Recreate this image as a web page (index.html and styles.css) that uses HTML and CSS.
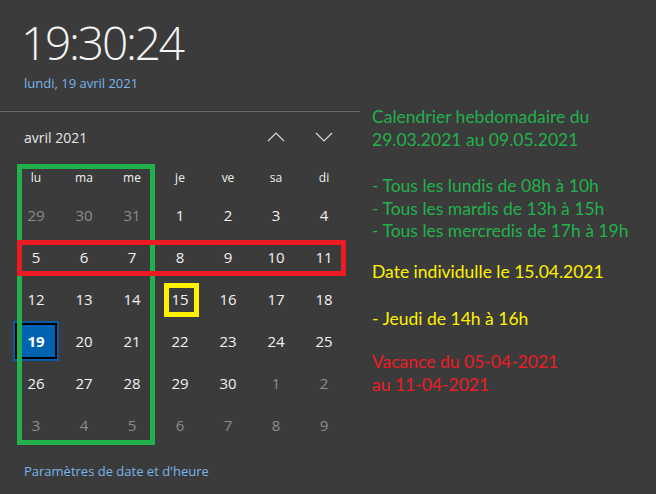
FILE: index.html
```html
<!DOCTYPE html>
<html lang="fr">
<head>
<meta charset="utf-8">
<title>Calendrier</title>
<link rel="stylesheet" href="styles.css">
</head>
<body>
<div class="page">
  <section class="flyout">
    <div class="clock">19:30:24</div>
    <div class="today-line">lundi, 19 avril 2021</div>
    <hr class="sep">
    <div class="month-bar">
      <span class="month">avril 2021</span>
      <div class="arrows">
        <svg class="arrow" width="18" height="10" viewBox="0 0 18 10"><polyline points="1,9 9,1 17,9" fill="none" stroke="#d8d8d8" stroke-width="1.2"/></svg>
        <svg class="arrow" width="18" height="10" viewBox="0 0 18 10"><polyline points="1,1 9,9 17,1" fill="none" stroke="#d8d8d8" stroke-width="1.2"/></svg>
      </div>
    </div>
    <div class="grid">
      <div class="dow">lu</div><div class="dow">ma</div><div class="dow">me</div><div class="dow">je</div><div class="dow">ve</div><div class="dow">sa</div><div class="dow">di</div>
      <div class="day other">29</div><div class="day other">30</div><div class="day other">31</div><div class="day">1</div><div class="day">2</div><div class="day">3</div><div class="day">4</div>
      <div class="day">5</div><div class="day">6</div><div class="day">7</div><div class="day">8</div><div class="day">9</div><div class="day">10</div><div class="day">11</div>
      <div class="day">12</div><div class="day">13</div><div class="day">14</div><div class="day">15</div><div class="day">16</div><div class="day">17</div><div class="day">18</div>
      <div class="day today">19</div><div class="day">20</div><div class="day">21</div><div class="day">22</div><div class="day">23</div><div class="day">24</div><div class="day">25</div>
      <div class="day">26</div><div class="day">27</div><div class="day">28</div><div class="day">29</div><div class="day">30</div><div class="day other">1</div><div class="day other">2</div>
      <div class="day other">3</div><div class="day other">4</div><div class="day other">5</div><div class="day other">6</div><div class="day other">7</div><div class="day other">8</div><div class="day other">9</div>
    </div>
    <a class="settings">Paramètres de date et d'heure</a>
    <div class="mark mark-green"></div>
    <div class="mark mark-red"></div>
    <div class="mark mark-yellow"></div>
  </section>
  <section class="notes">
    <p class="note green n1">Calendrier hebdomadaire du<br>29.03.2021 au 09.05.2021</p>
    <p class="note green n2">- Tous les lundis de 08h à 10h<br>- Tous les mardis de 13h à 15h<br>- Tous les mercredis de 17h à 19h</p>
    <p class="note yellow n3">Date individulle le 15.04.2021</p>
    <p class="note yellow n4">- Jeudi de 14h à 16h</p>
    <p class="note red n5">Vacance du 05-04-2021<br>au 11-04-2021</p>
  </section>
</div>
</body>
</html>
```
FILE: styles.css
```css
html, body {
  margin: 0;
  padding: 0;
}
body {
  background: #3b3b3b;
  width: 656px;
  height: 494px;
  overflow: hidden;
  font-family: "Open Sans", "Noto Sans", sans-serif;
  color: #ffffff;
}
.page {
  display: flex;
  height: 494px;
}
.flyout {
  position: relative;
  width: 360px;
  flex: none;
}
.clock {
  padding: 20px 0 0 21px;
  font-size: 46px;
  line-height: 44px;
  font-weight: 300;
  letter-spacing: -2.2px;
  color: #f4f4f4;
}
.today-line {
  margin-top: 10px;
  padding-left: 24px;
  font-size: 13px;
  line-height: 18px;
  color: #78b6ea;
}
.sep {
  margin: 19px 0 0 0;
  border: 0;
  border-top: 1px solid #6a6a6a;
  height: 0;
}
.month-bar {
  display: flex;
  align-items: center;
  justify-content: space-between;
  height: 36px;
  margin-top: 7px;
  padding: 0 27px 0 24px;
}
.month {
  font-size: 14px;
  color: #e6e6e6;
}
.arrows {
  display: flex;
  gap: 30px;
  align-items: center;
}
.arrow {
  display: block;
}
.grid {
  display: grid;
  grid-template-columns: repeat(7, 48px);
  grid-template-rows: 34px repeat(6, 42px);
  margin: 5px 0 0 12px;
}
.dow {
  display: flex;
  align-items: center;
  justify-content: center;
  font-size: 12px;
  color: #f0f0f0;
}
.day {
  display: flex;
  align-items: center;
  justify-content: center;
  font-size: 15px;
  color: #f2f2f2;
}
.day.other {
  color: #8c8c8c;
}
.day.today {
  margin: 1px;
  background: #0063b1;
  border: 2px solid #0b5aa6;
  box-shadow: inset 0 0 0 2px #000;
  font-weight: 700;
  color: #fff;
}
.settings {
  display: block;
  margin-top: 16px;
  padding-left: 24px;
  font-size: 13px;
  line-height: 18px;
  color: #78b6ea;
}
.mark {
  position: absolute;
  box-sizing: border-box;
}
.mark-green {
  left: 17px;
  top: 164px;
  width: 138px;
  height: 281px;
  border: 5px solid #22b14c;
}
.mark-red {
  left: 17px;
  top: 240px;
  width: 329px;
  height: 36px;
  border: 5px solid #ed1c24;
}
.mark-yellow {
  left: 164px;
  top: 283px;
  width: 35px;
  height: 34px;
  border: 5px solid #fff200;
}
.notes {
  padding: 106px 0 0 12px;
  font-family: Lato, "Open Sans", sans-serif;
  font-size: 17.5px;
  line-height: 22.5px;
}
.note {
  margin: 0;
  white-space: nowrap;
}
.green { color: #22b14c; }
.yellow { color: #fff200; }
.red { color: #ed1c24; }
.n2 { margin-top: 24px; }
.n3 { margin-top: 18.5px; }
.n4 { margin-top: 24.5px; }
.n5 { margin-top: 20.5px; }
```
